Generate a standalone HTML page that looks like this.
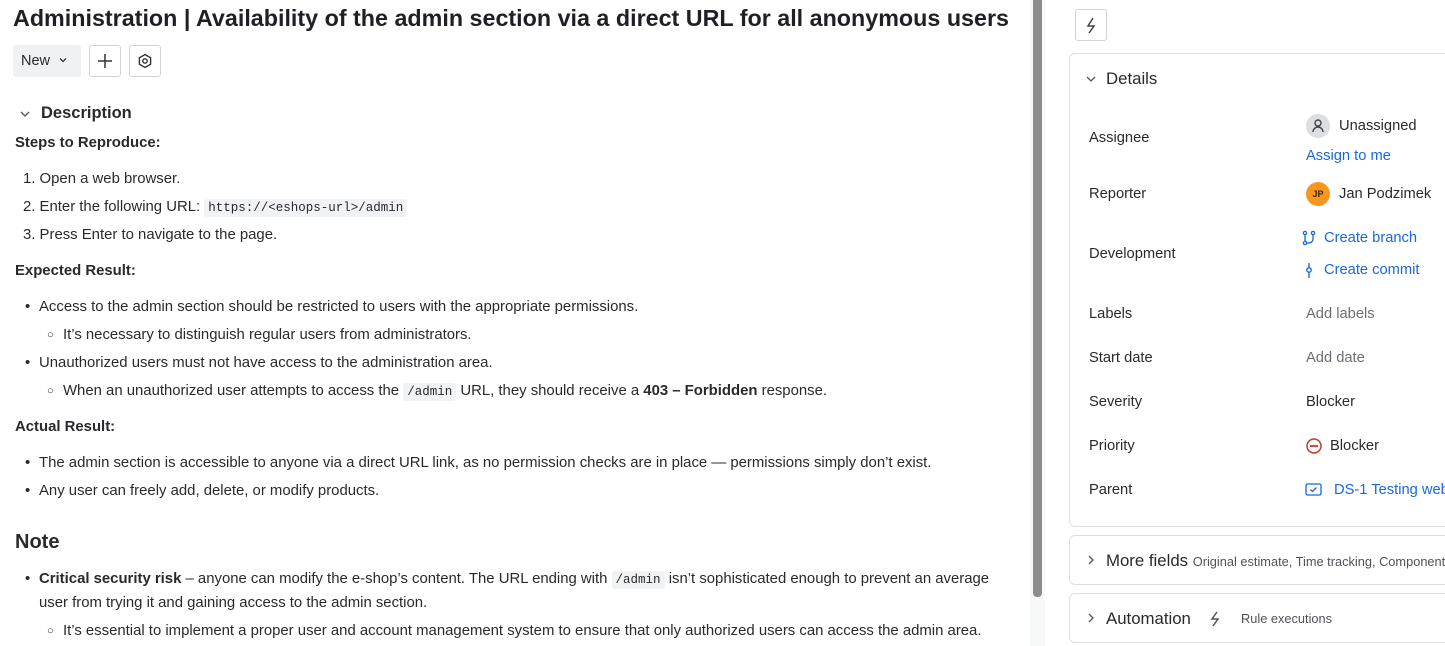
<!DOCTYPE html>
<html><head><meta charset="utf-8"><style>
*{margin:0;padding:0;box-sizing:border-box}
body{width:1445px;height:646px;overflow:hidden;background:#fff;font-family:"Liberation Sans",sans-serif;color:#292a2e;font-size:14.9px;position:relative}
.a{position:absolute;white-space:nowrap}
code{font-family:"Liberation Mono",monospace;font-size:12.5px;background:#f1f2f4;padding:2px 4px;border-radius:3px}
b{font-weight:bold}
.lbl{position:absolute;left:1089px;font-size:14.7px;white-space:nowrap}
.val{position:absolute;left:1306px;font-size:14.7px;white-space:nowrap}
.blue{color:#1868db}
.gray{color:#6b6e76}
.box{position:absolute;left:1069px;width:400px;border:1px solid #dcdfe4;border-radius:6px}
.btn{position:absolute;top:45px;width:32px;height:32px;border:1px solid #d0d3d8;border-radius:3px}
.bl{position:absolute;white-space:nowrap}
.bl::before{content:"•";position:absolute;left:-14px}
.sb::before{content:"○";left:-16px;font-size:11px;top:2px}
</style></head><body>
<div class="a" style="left:13px;top:5px;font-size:23.3px;font-weight:bold;color:#1f2025">Administration | Availability of the admin section via a direct URL for all anonymous users</div>
<div class="a" style="left:13px;top:45px;width:68px;height:32px;background:#f0f1f2;border-radius:3px;font-size:14.5px;padding:8px 8px">New <svg width="12" height="12" viewBox="0 0 12 12" style="margin-left:3px;vertical-align:-1px"><path d="M3 4.5l3 3 3-3" fill="none" stroke="#333" stroke-width="1.3"/></svg></div>
<div class="btn" style="left:89px"><svg width="30" height="30" viewBox="0 0 30 30"><path d="M15 8v14M8 15h14" stroke="#333" stroke-width="1.5"/></svg></div>
<div class="btn" style="left:129px"><svg width="30" height="30" viewBox="0 0 30 30"><path d="M15 8.5l5.6 3.25v6.5L15 21.5l-5.6-3.25v-6.5z" fill="none" stroke="#333" stroke-width="1.4"/><circle cx="15" cy="15" r="2.2" fill="none" stroke="#333" stroke-width="1.4"/></svg></div>
<svg class="a" style="left:18px;top:107px" width="14" height="14" viewBox="0 0 14 14"><path d="M3 5l4 4 4-4" fill="none" stroke="#555" stroke-width="1.3"/></svg>
<div class="a" style="left:41px;top:104px;font-size:16.5px;font-weight:bold">Description</div>
<div class="a" style="left:15px;top:135px"><b>Steps to Reproduce:</b></div>
<div class="a" style="left:23px;top:171px">1. Open a web browser.</div>
<div class="a" style="left:23px;top:199px">2. Enter the following URL: <code>https://&lt;eshops-url&gt;/admin</code></div>
<div class="a" style="left:23px;top:227px">3. Press Enter to navigate to the page.</div>
<div class="a" style="left:15px;top:263px"><b>Expected Result:</b></div>
<div class="bl" style="left:39px;top:299px">Access to the admin section should be restricted to users with the appropriate permissions.</div>
<div class="bl sb" style="left:63px;top:327px">It’s necessary to distinguish regular users from administrators.</div>
<div class="bl" style="left:39px;top:355px">Unauthorized users must not have access to the administration area.</div>
<div class="bl sb" style="left:63px;top:383px">When an unauthorized user attempts to access the <code>/admin</code> URL, they should receive a <b>403 – Forbidden</b> response.</div>
<div class="a" style="left:15px;top:419px"><b>Actual Result:</b></div>
<div class="bl" style="left:39px;top:455px">The admin section is accessible to anyone via a direct URL link, as no permission checks are in place — permissions simply don’t exist.</div>
<div class="bl" style="left:39px;top:483px">Any user can freely add, delete, or modify products.</div>
<div class="a" style="left:15px;top:531px;font-size:20px;font-weight:bold">Note</div>
<div class="bl" style="left:39px;top:571px"><b>Critical security risk</b> – anyone can modify the e-shop’s content. The URL ending with <code>/admin</code> isn’t sophisticated enough to prevent an average</div>
<div class="a" style="left:39px;top:595px">user from trying it and gaining access to the admin section.</div>
<div class="bl sb" style="left:63px;top:623px">It’s essential to implement a proper user and account management system to ensure that only authorized users can access the admin area.</div>
<div class="a" style="left:1030px;top:0;width:15px;height:646px;background:#f7f8f9"></div>
<div class="a" style="left:1033px;top:0;width:9px;height:597px;background:#8c8c8c;border-radius:0 0 4px 4px"></div>
<div class="a" style="left:1075px;top:9px;width:32px;height:32px;border:1px solid #d0d3d8;border-radius:3px"><svg width="30" height="30" viewBox="0 0 30 30"><path d="M17 8l-5 8h6l-5 7" fill="none" stroke="#444" stroke-width="1.5"/></svg></div>
<div class="box" style="top:53px;height:474px"></div>
<svg class="a" style="left:1084px;top:72px" width="14" height="14" viewBox="0 0 14 14"><path d="M3 5l4 4 4-4" fill="none" stroke="#555" stroke-width="1.3"/></svg>
<div class="a" style="left:1106px;top:69px;font-size:16.8px">Details</div>
<div class="lbl" style="top:130px">Assignee</div>
<div class="a" style="left:1306px;top:114px;width:24px;height:24px;border-radius:50%;background:#dddee1"><svg width="24" height="24" viewBox="0 0 24 24"><circle cx="12" cy="9" r="3" fill="none" stroke="#444" stroke-width="1.4"/><path d="M7 18a5 5 0 0 1 10 0" fill="none" stroke="#444" stroke-width="1.4"/></svg></div>
<div class="val" style="left:1339px;top:118px">Unassigned</div>
<div class="val blue" style="top:148px">Assign to me</div>
<div class="lbl" style="top:186px">Reporter</div>
<div class="a" style="left:1306px;top:182px;width:24px;height:24px;border-radius:50%;background:#f8961e;font-size:9px;font-weight:bold;color:#3a2a10;text-align:center;line-height:24px">JP</div>
<div class="val" style="left:1339px;top:186px">Jan Podzimek</div>
<div class="lbl" style="top:246px">Development</div>
<svg class="a" style="left:1302px;top:230px" width="14" height="16" viewBox="0 0 14 16"><circle cx="3" cy="3" r="1.6" fill="none" stroke="#1868db" stroke-width="1.3"/><circle cx="3" cy="13" r="1.6" fill="none" stroke="#1868db" stroke-width="1.3"/><circle cx="11" cy="3" r="1.6" fill="none" stroke="#1868db" stroke-width="1.3"/><path d="M3 5v6M11 5v4q0 4-6 4" fill="none" stroke="#1868db" stroke-width="1.3"/></svg>
<div class="val blue" style="left:1324px;top:230px">Create branch</div>
<svg class="a" style="left:1304px;top:262px" width="10" height="16" viewBox="0 0 10 16"><path d="M5 1v15" stroke="#1868db" stroke-width="1.4"/><circle cx="5" cy="8" r="2.2" fill="#fff" stroke="#1868db" stroke-width="1.4"/></svg>
<div class="val blue" style="left:1324px;top:262px">Create commit</div>
<div class="lbl" style="top:306px">Labels</div><div class="val gray" style="top:306px">Add labels</div>
<div class="lbl" style="top:350px">Start date</div><div class="val gray" style="top:350px">Add date</div>
<div class="lbl" style="top:394px">Severity</div><div class="val" style="top:394px">Blocker</div>
<div class="lbl" style="top:438px">Priority</div>
<svg class="a" style="left:1305px;top:437px" width="18" height="18" viewBox="0 0 18 18"><circle cx="9" cy="9" r="7" fill="none" stroke="#c9372c" stroke-width="1.5"/><path d="M5 9h8" stroke="#c9372c" stroke-width="1.8"/></svg>
<div class="val" style="left:1330px;top:438px">Blocker</div>
<div class="lbl" style="top:482px">Parent</div>
<svg class="a" style="left:1305px;top:482px" width="18" height="16" viewBox="0 0 18 16"><rect x="1" y="2" width="15" height="11" rx="1.5" fill="none" stroke="#1868db" stroke-width="1.3"/><path d="M5.5 7.5l2 2 4-4" fill="none" stroke="#1868db" stroke-width="1.3"/></svg>
<div class="val blue" style="left:1334px;top:482px">DS-1 Testing web</div>
<div class="box" style="top:535px;height:50px"></div>
<svg class="a" style="left:1084px;top:553px" width="14" height="14" viewBox="0 0 14 14"><path d="M5 3l4 4-4 4" fill="none" stroke="#555" stroke-width="1.3"/></svg>
<div class="a" style="left:1106px;top:551px;font-size:16.8px">More fields <span style="font-size:12.8px;color:#505258">Original estimate, Time tracking, Components</span></div>
<div class="box" style="top:593px;height:50px"></div>
<svg class="a" style="left:1084px;top:611px" width="14" height="14" viewBox="0 0 14 14"><path d="M5 3l4 4-4 4" fill="none" stroke="#555" stroke-width="1.3"/></svg>
<div class="a" style="left:1106px;top:609px;font-size:16.8px">Automation</div>
<svg class="a" style="left:1206px;top:610px" width="18" height="18" viewBox="0 0 18 18"><path d="M11 2l-5 7h6l-5 7" fill="none" stroke="#555" stroke-width="1.5"/></svg>
<div class="a" style="left:1241px;top:611px;font-size:12.8px;color:#505258">Rule executions</div>
</body></html>
